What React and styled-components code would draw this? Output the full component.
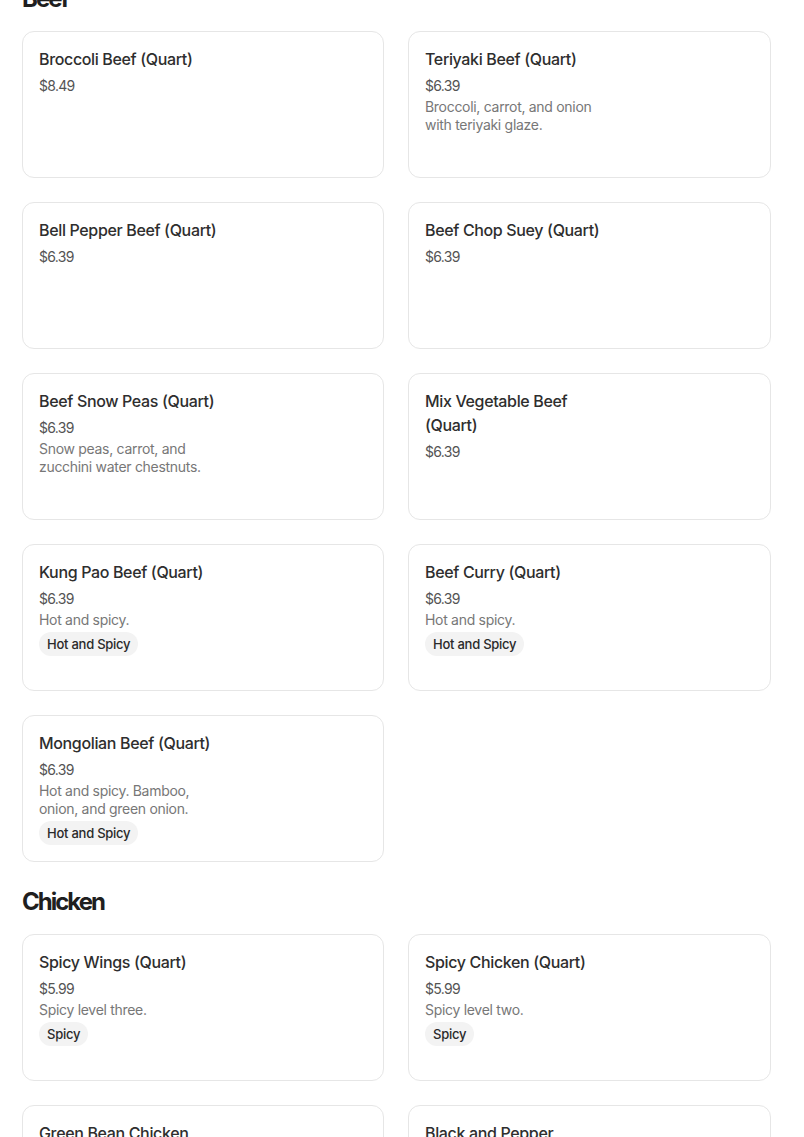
import styled, { createGlobalStyle } from "styled-components";

const Global = createGlobalStyle`
  body {
    margin: 0;
    background: #ffffff;
    font-family: Inter, "Noto Sans", sans-serif;
    color: #222222;
  }
`;

const Page = styled.div`
  width: 749px;
  padding-left: 22px;
  margin-top: -17px;
`;

const Section = styled.section`
  margin-bottom: 24px;
`;

const Heading = styled.h2`
  margin: 0 0 16px;
  font-size: 24px;
  line-height: 32px;
  font-weight: 700;
  letter-spacing: -2px;
  color: #1f1f1f;
`;

const Grid = styled.div`
  display: grid;
  grid-template-columns: 362px 363px;
  column-gap: 24px;
  row-gap: 24px;
`;

const Card = styled.div`
  box-sizing: border-box;
  height: 147px;
  border: 1px solid #e6e6e6;
  border-radius: 12px;
  padding: 15px 16px 16px;
  display: flex;
  flex-direction: column;
  align-items: flex-start;
`;

const Title = styled.div`
  max-width: 186px;
  font-size: 16px;
  line-height: 24px;
  font-weight: 500;
  letter-spacing: -0.35px;
  color: #2e2e2e;
`;

const Price = styled.div`
  margin-top: 5px;
  font-size: 14px;
  line-height: 20px;
  letter-spacing: -0.7px;
  color: #545454;
`;

const Desc = styled.div`
  max-width: 186px;
  margin-top: 2px;
  font-size: 14px;
  line-height: 18px;
  letter-spacing: -0.3px;
  color: #777777;
`;

const Tag = styled.span`
  margin-top: 3px;
  padding: 0 8px;
  height: 24px;
  line-height: 24px;
  border-radius: 12px;
  background: #f3f3f3;
  font-size: 13px;
  font-weight: 500;
  letter-spacing: -0.25px;
  color: #2a2a2a;
`;

const sections = [
  {
    name: "Beef",
    items: [
      { title: "Broccoli Beef (Quart)", price: "$8.49" },
      { title: "Teriyaki Beef (Quart)", price: "$6.39", desc: "Broccoli, carrot, and onion with teriyaki glaze." },
      { title: "Bell Pepper Beef (Quart)", price: "$6.39" },
      { title: "Beef Chop Suey (Quart)", price: "$6.39" },
      { title: "Beef Snow Peas (Quart)", price: "$6.39", desc: "Snow peas, carrot, and zucchini water chestnuts." },
      { title: "Mix Vegetable Beef (Quart)", price: "$6.39" },
      { title: "Kung Pao Beef (Quart)", price: "$6.39", desc: "Hot and spicy.", tag: "Hot and Spicy" },
      { title: "Beef Curry (Quart)", price: "$6.39", desc: "Hot and spicy.", tag: "Hot and Spicy" },
      { title: "Mongolian Beef (Quart)", price: "$6.39", desc: "Hot and spicy. Bamboo, onion, and green onion.", tag: "Hot and Spicy" },
    ],
  },
  {
    name: "Chicken",
    items: [
      { title: "Spicy Wings (Quart)", price: "$5.99", desc: "Spicy level three.", tag: "Spicy" },
      { title: "Spicy Chicken (Quart)", price: "$5.99", desc: "Spicy level two.", tag: "Spicy" },
      { title: "Green Bean Chicken (Quart)", price: "$6.39" },
      { title: "Black and Pepper Chicken (Quart)", price: "$6.39" },
    ],
  },
];

const MenuCard = ({ item }) => (
  <Card>
    <Title>{item.title}</Title>
    <Price>{item.price}</Price>
    {item.desc && <Desc>{item.desc}</Desc>}
    {item.tag && <Tag>{item.tag}</Tag>}
  </Card>
);

const App = () => {
  return (
    <Page>
      <Global />
      {sections.map((s) => (
        <Section key={s.name}>
          <Heading>{s.name}</Heading>
          <Grid>
            {s.items.map((item) => (
              <MenuCard key={item.title} item={item} />
            ))}
          </Grid>
        </Section>
      ))}
    </Page>
  );
};

export default App;
